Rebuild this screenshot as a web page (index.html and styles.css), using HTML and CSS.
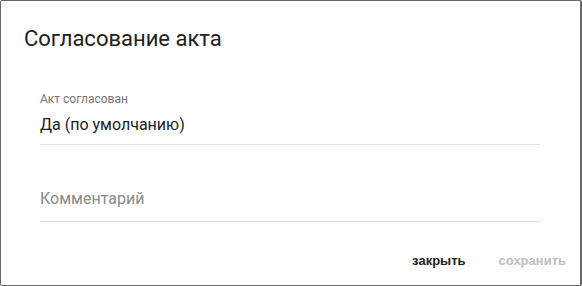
FILE: index.html
```html
<!DOCTYPE html>
<html lang="ru">
<head>
  <meta charset="UTF-8" />
  <meta name="viewport" content="width=device-width, initial-scale=1.0"/>
  <title>Согласование акта</title>
  <link rel="stylesheet" href="styles.css">
</head>
<body>

<div class="dialog">
  <div class="dialog-title">Согласование акта</div>

  <div class="dialog-content">
    <div class="field">
      <label class="field-label">Акт согласован</label>
      <div class="field-value">Да (по умолчанию)</div>
    </div>

    <div class="field field-comment">
      <input class="field-input" type="text" placeholder="Комментарий">
    </div>
  </div>

  <div class="dialog-actions">
    <button class="btn">закрыть</button>
    <button class="btn btn-disabled" disabled>сохранить</button>
  </div>
</div>

</body>
</html>
```

FILE: styles.css
```css
body {
  margin: 0;
  font-family: Roboto, 'Noto Sans', sans-serif;
  background-color: #fff;
}

.dialog {
  width: 582px;
  height: 286px;
  box-sizing: border-box;
  border: 1px solid #666;
  border-right-width: 2px;
  border-radius: 2px;
  background: #fff;
  display: flex;
  flex-direction: column;
}

.dialog-title {
  padding: 22px 23px 0;
  font-size: 22px;
  line-height: 32px;
  color: #212121;
}

.dialog-content {
  padding: 37px 40px 0 39px;
  flex: 1;
}

.field {
  border-bottom: 1px solid #e0e0e0;
}

.field-label {
  display: block;
  font-size: 12px;
  line-height: 14px;
  color: #757575;
}

.field-value {
  font-size: 16px;
  line-height: 20px;
  padding: 9px 0 9px;
  color: #212121;
}

.field-comment {
  margin-top: 35px;
}

.field-input {
  display: block;
  width: 100%;
  border: none;
  outline: none;
  padding: 9px 0 12px;
  font-family: Roboto, 'Noto Sans', sans-serif;
  font-size: 16px;
  line-height: 20px;
  color: #212121;
  background: transparent;
}

.field-input::placeholder {
  color: #8a8a8a;
}

.dialog-actions {
  display: flex;
  justify-content: flex-end;
  padding: 0 6px 11px;
}

.btn {
  border: none;
  background: none;
  padding: 6px 8px;
  margin-left: 17px;
  font-family: 'Liberation Sans', Arial, sans-serif;
  font-weight: bold;
  font-size: 13px;
  color: #212121;
  cursor: pointer;
}

.btn-disabled {
  color: #bdbdbd;
  cursor: default;
}
```
